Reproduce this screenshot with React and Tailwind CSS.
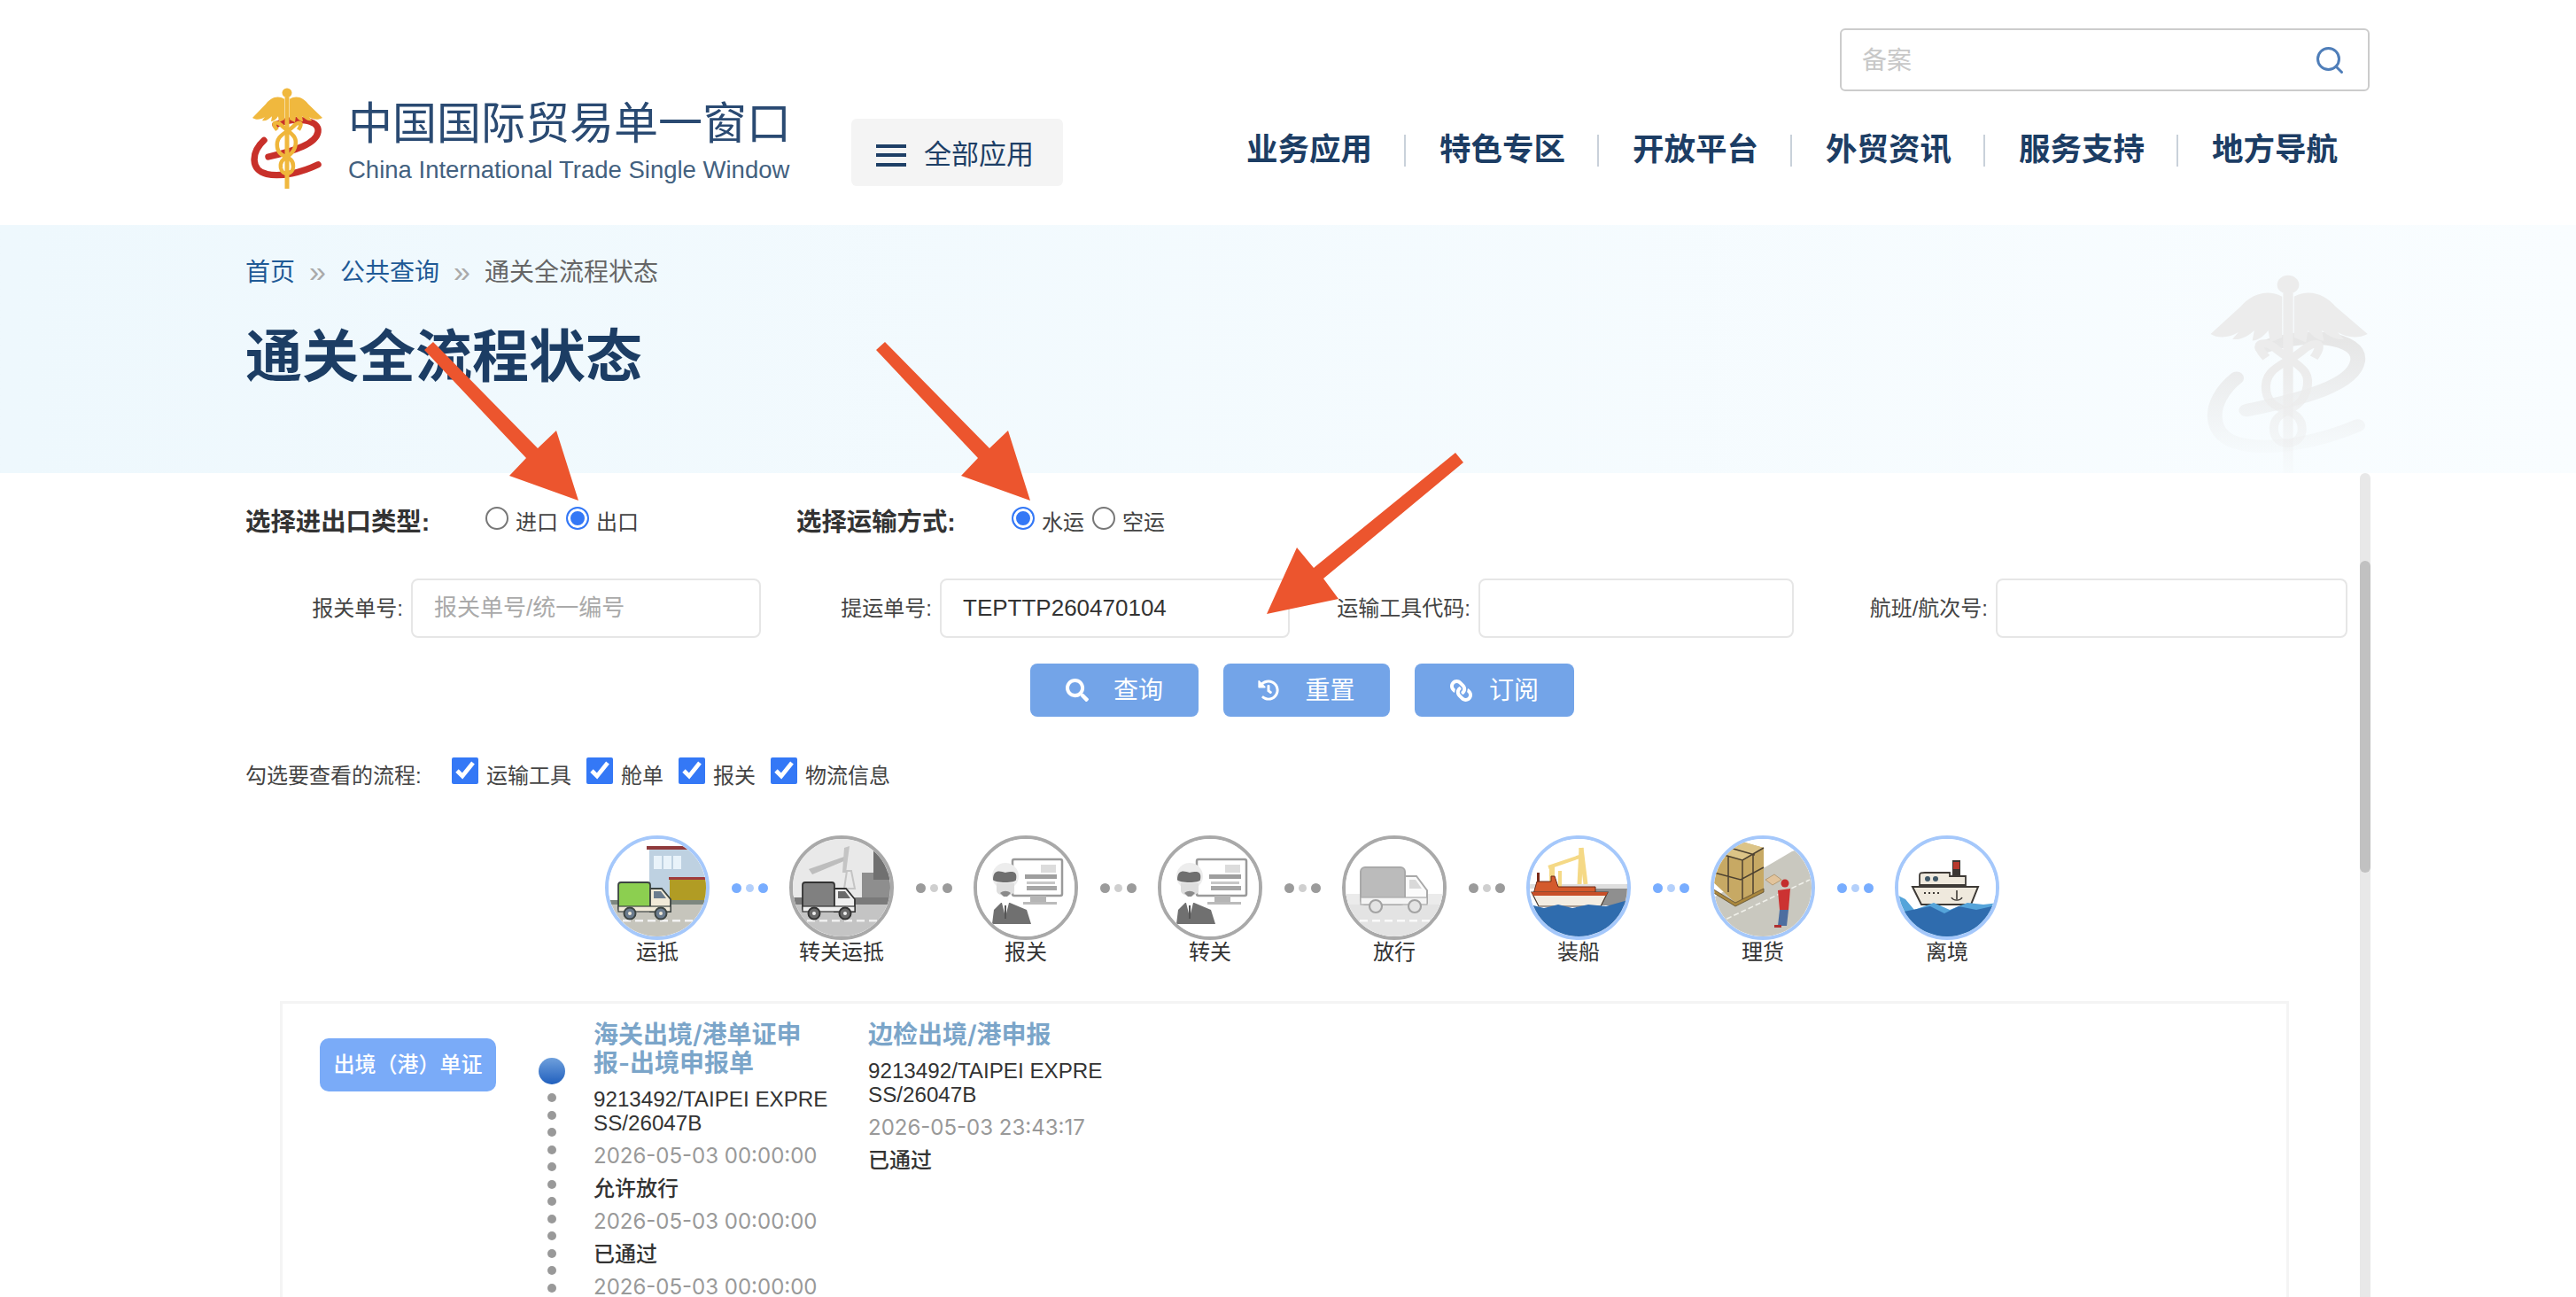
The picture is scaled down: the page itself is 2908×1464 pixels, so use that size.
import React from "react";
import { FaSearch, FaHistory, FaLink } from "react-icons/fa";
import { Search } from "lucide-react";

const sans = "font-['Liberation_Sans','Noto_Sans_CJK_SC',sans-serif]";
const inter = "font-['Inter','Noto_Sans_CJK_SC',sans-serif]";

const navItems = ["业务应用", "特色专区", "开放平台", "外贸资讯", "服务支持", "地方导航"];

// Logo mark, also used washed out as the banner watermark
function Caduceus({ wing, snake, swoosh, className, id, fade }) {
  const wingFill = fade ? `url(#${id})` : wing;
  const snakeStroke = fade ? `url(#${id})` : snake;
  const swooshStroke = fade ? `url(#${id}s)` : swoosh;
  return (
    <svg viewBox="12 6 82 118" preserveAspectRatio="none" className={className}>
      {fade && (
        <defs>
          <linearGradient id={id} gradientUnits="userSpaceOnUse" x1="0" y1="6" x2="0" y2="124">
            <stop offset="0" stopColor={wing} />
            <stop offset="0.5" stopColor={wing} />
            <stop offset="1" stopColor={wing} stopOpacity="0.1" />
          </linearGradient>
          <linearGradient id={`${id}s`} gradientUnits="userSpaceOnUse" x1="0" y1="45" x2="0" y2="115">
            <stop offset="0" stopColor={swoosh} />
            <stop offset="1" stopColor={swoosh} stopOpacity="0.05" />
          </linearGradient>
        </defs>
      )}
      <path d="M40 50C62 40 90 44 88 58C86 72 62 80 32 87" fill="none" stroke={swooshStroke} strokeWidth="7.5" strokeLinecap="round" />
      <path d="M27 68C12 82 12 103 30 107C46 111 70 105 88 96" fill="none" stroke={swooshStroke} strokeWidth="7.5" strokeLinecap="round" />
      <circle cx="53" cy="13" r="5.5" fill={wingFill} />
      <path d="M50 20C42 15 34 19 29 26L14 42C18 45 24 44 28 41L25 45C29 46 33 43 36 40L35 46C38 46 41 43 43 40L44 47L50 44Z" fill={wingFill} />
      <path d="M56 20C64 15 72 19 77 26L93 42C88 45 82 44 78 41L81 45C77 46 73 43 70 40L71 46C68 46 65 43 63 40L62 47L56 44Z" fill={wingFill} />
      <rect x="50.5" y="18" width="5" height="106" fill={wingFill} />
      <path d="M42 56C34 46 42 46 46 50C56 60 66 62 62 76C58 90 44 86 46 100C48 110 60 108 60 98C60 84 44 90 42 76C40 62 52 60 60 52C66 46 72 46 66 56" fill="none" stroke={snakeStroke} strokeWidth="4.5" />
    </svg>
  );
}

function Logo() {
  return (
    <div className="flex ml-[6px] mt-[98px] items-start">
      <Caduceus wing="#f0b83e" snake="#efb63a" swoosh="#c8302a" className="w-[82px] h-[115px]" />
      <div className="ml-[28px] flex flex-col">
        <div className="mt-[17px] text-[50px] leading-[50px] text-[#2a4a72] whitespace-nowrap">中国国际贸易单一窗口</div>
        <div className="mt-[13px] text-[27.5px] leading-[28px] text-[#43617f] whitespace-nowrap">China International Trade Single Window</div>
      </div>
    </div>
  );
}

function Truck({ cargo, cab, line, hub }) {
  return (
    <g>
      <rect x="15" y="53" width="36" height="32" rx="3" fill={cargo} stroke={line} strokeWidth="1.8" />
      <path d="M51 60H64L74 72V86H51Z" fill={cab} stroke={line} strokeWidth="1.8" />
      <path d="M55 63H63L69 71H55Z" fill={hub} />
      <rect x="15" y="80" width="59" height="6" fill={cab} stroke={line} strokeWidth="1.2" />
      <circle cx="28" cy="88" r="6.5" fill={hub} stroke={line} strokeWidth="2" />
      <circle cx="63" cy="88" r="6.5" fill={hub} stroke={line} strokeWidth="2" />
      <circle cx="28" cy="88" r="2" fill={cab} />
      <circle cx="63" cy="88" r="2" fill={cab} />
    </g>
  );
}

function RoadDashes({ color }) {
  return (
    <g fill={color}>
      {[6, 20, 34, 48, 62, 76, 90, 104].map((x) => (
        <rect key={x} x={x} y="95" width="9" height="2.5" />
      ))}
    </g>
  );
}

function SceneArrive() {
  return (
    <>
      <rect width="118" height="118" fill="#fff" />
      <rect x="50" y="16" width="68" height="62" fill="#bed1e1" />
      <rect x="47" y="12" width="46" height="4" fill="#8f3a3c" />
      {[55, 66, 77].map((x) => (
        <rect key={x} x={x} y="23" width="9" height="15" fill="#e9f3fa" />
      ))}
      <rect x="72" y="47" width="46" height="3" fill="#a03c3c" />
      <rect x="73" y="50" width="45" height="26" fill="#b19c24" />
      <rect x="0" y="73" width="118" height="5" fill="#7d877f" />
      <rect x="0" y="78" width="118" height="40" fill="#c6c5bc" />
      <RoadDashes color="#f2f2f2" />
      <Truck cargo="#8ccf50" cab="#f1ead8" line="#3c4442" hub="#6b7c8e" />
    </>
  );
}

function SceneTransfer() {
  return (
    <>
      <rect width="118" height="118" fill="#e9e9e9" />
      <path d="M62 60L65 40H70L74 60Z" fill="none" stroke="#c4c4c4" strokeWidth="2" />
      <path d="M22 38L62 24L64 28L26 44Z" fill="#bdbdbd" />
      <path d="M62 14L68 12L64 42H60Z" fill="#c4c4c4" />
      <path d="M82 42H118V70H82Z" fill="#8e8e8e" />
      <path d="M95 15L118 40V50H95Z" fill="#707070" />
      <rect x="0" y="70" width="118" height="8" fill="#7a7a7a" />
      <rect x="0" y="78" width="118" height="40" fill="#c4c4c4" />
      <RoadDashes color="#efefef" />
      <Truck cargo="#808080" cab="#f0f0f0" line="#333" hub="#6a6a6a" />
    </>
  );
}

function SceneOfficer() {
  return (
    <>
      <rect width="118" height="118" fill="#fff" />
      <rect x="44" y="27" width="56" height="41" rx="2" fill="#fff" stroke="#9a9a9a" strokeWidth="2.5" />
      <rect x="76" y="33" width="17" height="9" fill="#dcdcdc" />
      <rect x="58" y="44" width="36" height="5" fill="#9e9e9e" />
      <rect x="60" y="52" width="32" height="3" fill="#c7c7c7" />
      <rect x="60" y="57" width="34" height="5" fill="#a6a6a6" />
      <rect x="64" y="68" width="18" height="7" fill="#b5b5b5" />
      <rect x="56" y="75" width="38" height="3" fill="#bbbbbb" />
      <ellipse cx="36" cy="46" rx="15" ry="15" fill="#ededed" />
      <path d="M22 50C22 38 30 40 36 42C44 40 50 40 48 50C48 54 24 54 22 50Z" fill="#6f6f6f" />
      <path d="M26 54H46V62C46 70 26 70 26 62Z" fill="#dedede" />
      <path d="M30 65C34 62 38 62 42 65L38 69H34Z" fill="#8a8a8a" />
      <path d="M21 100L23 84L31 76H41L60 84L65 100Z" fill="#707070" />
      <path d="M32 76L36 92L40 76Z" fill="#fff" />
      <rect x="35" y="79" width="2" height="15" fill="#555" />
    </>
  );
}

function SceneRelease() {
  return (
    <>
      <rect width="118" height="118" fill="#fff" />
      <rect x="0" y="66" width="118" height="12" fill="#ebebeb" />
      <rect x="0" y="78" width="118" height="40" fill="#e3e3e3" />
      <RoadDashes color="#fafafa" />
      <rect x="21" y="36" width="50" height="42" rx="5" fill="#bbbbbb" stroke="#a9a9a9" strokeWidth="2" />
      <path d="M71 46H84L96 62V76H71Z" fill="#fbfbfb" stroke="#a9a9a9" strokeWidth="2" />
      <path d="M76 50H83L90 60H76Z" fill="#d9d9d9" />
      <rect x="21" y="70" width="75" height="8" fill="#f4f4f4" stroke="#a9a9a9" strokeWidth="1.2" />
      <circle cx="38" cy="80" r="7" fill="#e4e4e4" stroke="#a3a3a3" strokeWidth="2.2" />
      <circle cx="82" cy="80" r="7" fill="#e4e4e4" stroke="#a3a3a3" strokeWidth="2.2" />
    </>
  );
}

function SceneLoad() {
  return (
    <>
      <rect width="118" height="118" fill="#fff" />
      <rect x="50" y="55" width="68" height="24" fill="#8f8f8f" />
      <rect x="0" y="55" width="118" height="5" fill="#dedede" />
      <g fill="none" stroke="#f5d986" strokeWidth="5">
        <path d="M60 55L62 14" />
        <path d="M67 55L62 14" />
        <path d="M60 24L25 36" strokeWidth="4" />
        <path d="M29 36V56" strokeWidth="6" />
        <path d="M38 40V58" strokeWidth="4" />
      </g>
      <rect x="12" y="42" width="3" height="14" fill="#7a2a1a" />
      <path d="M8 66L12 52H28V46H32L36 58H78V66Z" fill="#d45a2c" stroke="#6a2a18" strokeWidth="1" />
      <path d="M6 64H92L84 80H14Z" fill="#f3ede2" stroke="#4a3a30" strokeWidth="1.2" />
      <path d="M6 64H92L90 68H8Z" fill="#c84f28" />
      <path d="M0 77L20 82L36 78L52 82L70 78L90 80L118 72V118H0Z" fill="#2f6cae" />
    </>
  );
}

function SceneTally() {
  return (
    <>
      <rect width="118" height="118" fill="#fff" />
      <path d="M0 72L92 18L118 10V118H0Z" fill="#c9c8bf" />
      <path d="M10 98L112 50" stroke="#f0f0ea" strokeWidth="1.6" strokeDasharray="6 3" />
      <path d="M2 52L8 20L32 6L60 14V60L28 76Z" fill="#c7a964" />
      <path d="M8 20L32 6L60 14L36 28Z" fill="#dcc487" />
      <g stroke="#4c4130" strokeWidth="1.5" fill="none">
        <path d="M36 28V72M8 20L36 28L60 14M4 42L34 50L60 36M20 24V64M48 22V66M22 14L50 22" />
      </g>
      <path d="M2 60L28 76L60 60V64L28 80L2 64Z" fill="#a9873e" stroke="#5c4a28" strokeWidth="0.8" />
      <path d="M62 50L72 44L80 50L70 56Z" fill="#e2c49c" stroke="#a08050" strokeWidth="0.6" />
      <circle cx="84" cy="54" r="4.5" fill="#c42c2c" />
      <path d="M76 62L90 60L88 84H78Z" fill="#cc3232" />
      <path d="M78 84H88L86 102H76Z" fill="#4d6ea0" />
      <rect x="72" y="101" width="8" height="3" fill="#b03030" />
    </>
  );
}

function SceneDepart() {
  return (
    <>
      <rect width="118" height="118" fill="#fff" />
      <rect x="65" y="28" width="9" height="32" fill="#3a3633" />
      <rect x="66" y="30" width="7" height="8" fill="#b8392e" />
      <path d="M28 45C28 42 30 42 34 42H62V46H80V56H28Z" fill="#efe9dd" stroke="#3e3a36" strokeWidth="1.8" />
      <circle cx="37" cy="49" r="3" fill="#3f5868" />
      <circle cx="46" cy="49" r="3" fill="#3f5868" />
      <path d="M20 58H94L86 78H30Z" fill="#efe9dd" stroke="#3e3a36" strokeWidth="2" />
      <path d="M33 65H50" stroke="#3e3a36" strokeWidth="2" strokeDasharray="2 3" />
      <path d="M70 62V72M64 70C66 74 74 74 76 70" stroke="#3e3a36" strokeWidth="1.6" fill="none" />
      <path d="M0 66L12 72L22 84L44 76L62 84L82 76L100 78L118 76V118H0Z" fill="#55a4da" />
      <path d="M0 88L20 84L40 80L56 88L72 80L92 84L118 78V118H0Z" fill="#2f6cae" />
    </>
  );
}

const steps = [
  { name: "运抵", active: true, Scene: SceneArrive },
  { name: "转关运抵", active: false, Scene: SceneTransfer },
  { name: "报关", active: false, Scene: SceneOfficer },
  { name: "转关", active: false, Scene: SceneOfficer },
  { name: "放行", active: false, Scene: SceneRelease },
  { name: "装船", active: true, Scene: SceneLoad },
  { name: "理货", active: true, Scene: SceneTally },
  { name: "离境", active: true, Scene: SceneDepart },
];

function Step({ name, active, Scene }) {
  return (
    <div className="w-[118px] flex flex-col items-center">
      <div className={`w-[118px] h-[118px] rounded-full overflow-hidden border-[4px] ${active ? "border-[#a5c8fb]" : "border-[#a9a9a9]"}`}>
        <svg viewBox="4 4 110 110" className="w-full h-full">
          <Scene />
        </svg>
      </div>
      <div className="text-[24px] leading-[28px] text-[#333] whitespace-nowrap">{name}</div>
    </div>
  );
}

function Dots({ active }) {
  return (
    <div className="w-[90px] h-[118px] flex items-center justify-center gap-[5px]">
      <span className={`w-[11px] h-[11px] rounded-full ${active ? "bg-[#78adff]" : "bg-[#9b9b9b]"}`} />
      <span className={`w-[9px] h-[9px] rounded-full ${active ? "bg-[#b4d0fb]" : "bg-[#cfcfcf]"}`} />
      <span className={`w-[11px] h-[11px] rounded-full ${active ? "bg-[#78adff]" : "bg-[#9b9b9b]"}`} />
    </div>
  );
}

function Field({ label, labelWidth, inputWidth, value, placeholder }) {
  return (
    <div className="flex items-center">
      <label className={`${labelWidth} text-right text-[24px] leading-[30px] text-[#444] whitespace-nowrap`}>{label}</label>
      <input
        readOnly
        value={value || ""}
        placeholder={placeholder}
        className={`${inputWidth} ml-[9px] h-[67px] pl-[24px] border-2 border-[#e6e6e6] rounded-[8px] bg-white text-[26px] text-[#333] placeholder:text-[#aaa] outline-none`}
      />
    </div>
  );
}

function Radio({ label, checked, name }) {
  return (
    <div className="flex items-start mr-[9px]">
      <input
        type="radio"
        name={name}
        defaultChecked={checked}
        className="appearance-none w-[26px] h-[26px] m-0 rounded-full border-2 border-[#777] bg-white checked:border-[#3478f6] checked:bg-[#3478f6] checked:shadow-[inset_0_0_0_3px_#fff]"
      />
      <span className="ml-[8px] mt-[6px] text-[24px] leading-[24px] text-[#444] whitespace-nowrap">{label}</span>
    </div>
  );
}

function Check({ label }) {
  return (
    <div className="flex items-start mr-[17px]">
      <input type="checkbox" defaultChecked className="w-[30px] h-[30px] m-0 accent-[#3478f6]" />
      <span className="ml-[9px] mt-[6px] text-[24px] leading-[30px] text-[#444] whitespace-nowrap">{label}</span>
    </div>
  );
}

function ActionButton({ icon, label, width, gap }) {
  return (
    <button className={`${width} ${gap} h-[60px] flex items-center justify-center rounded-[8px] bg-[#73a4e8] text-white text-[28px]`}>
      {icon}
      <span className="mt-[2px]">{label}</span>
    </button>
  );
}

function Record({ title, vessel, entries }) {
  return (
    <div className="w-[270px]">
      <div className={`${inter} text-[28px] leading-[32px] font-semibold text-[#7ba5c9]`}>{title}</div>
      <div className="mt-[11px] text-[24.2px] leading-[27px] text-[#333] break-all">{vessel}</div>
      {entries.map((entry, i) => (
        <div key={i} className={`mt-[10px] text-[24px] leading-[27px] ${entry.time ? `${inter} text-[#999]` : "font-medium text-[#333]"}`}>
          {entry.time || entry.status}
        </div>
      ))}
    </div>
  );
}

export default function App() {
  return (
    <div className={`${sans} relative w-[2908px] h-[1464px] overflow-hidden bg-white`}>
      {/* header */}
      <header className="h-[254px] pl-[277px] pr-[233px] flex items-start">
        <Logo />
        <button className="ml-[68px] mt-[134px] w-[239px] h-[76px] pl-[28px] pt-[6px] flex items-center rounded-[6px] bg-[#f4f4f4] text-[31px] text-[#1e3f66]">
          <span className="w-[34px] flex flex-col gap-[6.5px]">
            <span className="h-[4px] bg-[#1e3f66]" />
            <span className="h-[4px] bg-[#1e3f66]" />
            <span className="h-[4px] bg-[#1e3f66]" />
          </span>
          <span className="ml-[20px]">全部应用</span>
        </button>
        <div className="ml-auto flex flex-col items-end">
          <div className="mt-[32px] w-[598px] h-[71px] pl-[23px] pr-[25px] flex items-center justify-between border-2 border-[#ccc] rounded-[6px] bg-white">
            <span className="mt-[2px] text-[28px] text-[#c8c8c8]">备案</span>
            <Search className="w-[36px] h-[36px] text-[#4f7eb9]" strokeWidth={2} />
          </div>
          <nav className="mt-[49px] flex items-center">
            {navItems.map((item, i) => (
              <div key={item} className={`pl-[38px] pr-[36px] h-[36px] flex items-center text-[35.5px] font-bold text-[#1c3d64] whitespace-nowrap ${i > 0 ? "border-l-2 border-[#c9d1da]" : ""}`}>
                {item}
              </div>
            ))}
          </nav>
        </div>
      </header>

      {/* page banner */}
      <section className="h-[280px] pl-[277px] pr-[233px] flex justify-between bg-linear-to-r from-[#eef8fd] to-[#f9fdff]">
        <div>
          <div className="mt-[37px] flex items-center text-[28px] leading-[34px]">
            <span className="text-[#1f5a96]">首页</span>
            <span className="mx-[16px] -mt-[5px] text-[34px] text-[#aaa]">»</span>
            <span className="text-[#1f5a96]">公共查询</span>
            <span className="mx-[16px] -mt-[5px] text-[34px] text-[#aaa]">»</span>
            <span className="text-[#666]">通关全流程状态</span>
          </div>
          <h1 className="mt-[42px] text-[64px] leading-[72px] font-bold text-[#1c3d64]">通关全流程状态</h1>
        </div>
        <Caduceus id="wm" fade wing="#ececec" snake="#ececec" swoosh="#e6e6e6" className="self-end w-[184px] h-[226px]" />
      </section>

      {/* query form + result */}
      <div className="flex h-[930px]">
        <main className="w-[2664px] pl-[277px] overflow-hidden">
          <div className="mt-[38px] h-[81px] flex items-start">
            <div className="w-[622px] flex items-start">
              <div className="w-[271px] text-[28.4px] leading-[34px] font-bold text-[#333]">选择进出口类型:</div>
              <Radio name="ie" label="进口" />
              <Radio name="ie" label="出口" checked />
            </div>
            <div className="flex items-start">
              <div className="w-[243px] text-[28.4px] leading-[34px] font-bold text-[#333]">选择运输方式:</div>
              <Radio name="mode" label="水运" checked />
              <Radio name="mode" label="空运" />
            </div>
          </div>

          <div className="flex items-center">
            <Field label="报关单号:" labelWidth="w-[178px]" inputWidth="w-[395px]" placeholder="报关单号/统一编号" />
            <Field label="提运单号:" labelWidth="w-[193px]" inputWidth="w-[395px]" value="TEPTTP260470104" />
            <Field label="运输工具代码:" labelWidth="w-[204px]" inputWidth="w-[356px]" />
            <Field label="航班/航次号:" labelWidth="w-[219px]" inputWidth="w-[397px]" />
          </div>

          <div className="mt-[29px] ml-[886px] flex gap-[28px]">
            <ActionButton icon={<FaSearch className="w-[26px] h-[26px]" />} label="查询" width="w-[190px]" gap="gap-[28px]" />
            <ActionButton icon={<FaHistory className="w-[24px] h-[24px]" />} label="重置" width="w-[188px]" gap="gap-[29px]" />
            <ActionButton icon={<FaLink className="w-[25px] h-[25px] -scale-x-100" />} label="订阅" width="w-[180px]" gap="gap-[19px]" />
          </div>

          <div className="mt-[46px] h-[30px] flex items-start">
            <div className="w-[233px] mt-[6px] text-[24px] leading-[30px] text-[#444] whitespace-nowrap">勾选要查看的流程:</div>
            {["运输工具", "舱单", "报关", "物流信息"].map((label) => (
              <Check key={label} label={label} />
            ))}
          </div>

          <div className="mt-[58px] ml-[406px] flex items-start">
            {steps.map((step, i) => (
              <React.Fragment key={step.name}>
                <Step {...step} />
                {i < steps.length - 1 && <Dots active={step.active} />}
              </React.Fragment>
            ))}
          </div>

          <div className="mt-[41px] ml-[39px] w-[2268px] h-[600px] border-[3px] border-[#f4f4f4] pl-[42px] pt-[19px] flex items-start">
            <div className="mt-[20px] w-[199px] h-[60px] rounded-[10px] bg-[#7aabf8] flex items-center justify-center text-[24px] font-medium text-white whitespace-nowrap">
              出境（港）单证
            </div>
            <div className="ml-[48px] mt-[42px] w-[30px] flex flex-col items-center">
              <span className="w-[30px] h-[30px] rounded-full bg-linear-to-b from-[#6fa0dc] to-[#1f5fbd]" />
              <div className="mt-[10px] flex flex-col gap-[9.5px]">
                {Array.from({ length: 12 }).map((_, i) => (
                  <span key={i} className="block w-[10px] h-[10px] rounded-full bg-[#999]" />
                ))}
              </div>
            </div>
            <div className="ml-[32px] flex gap-[40px]">
              <Record
                title="海关出境/港单证申报-出境申报单"
                vessel="9213492/TAIPEI EXPRESS/26047B"
                entries={[
                  { time: "2026-05-03 00:00:00" },
                  { status: "允许放行" },
                  { time: "2026-05-03 00:00:00" },
                  { status: "已通过" },
                  { time: "2026-05-03 00:00:00" },
                ]}
              />
              <Record
                title="边检出境/港申报"
                vessel="9213492/TAIPEI EXPRESS/26047B"
                entries={[{ time: "2026-05-03 23:43:17" }, { status: "已通过" }]}
              />
            </div>
          </div>
        </main>

        {/* inner scrollbar */}
        <div className="w-[12px] h-full rounded-t-full bg-[#e8e8e8]">
          <div className="mt-[99px] h-[352px] rounded-full bg-[#c1c1c1]" />
        </div>
      </div>

      {/* annotation arrows drawn over the screenshot */}
      <svg className="absolute left-0 top-0 w-[2908px] h-[1464px] pointer-events-none" viewBox="0 0 2908 1464">
        <g fill="#ec552e">
          <polygon points="489,386 607,506 628,486 653,565 575,537 594,517 479,395" />
          <polygon points="999,386 1117,506 1138,486 1163,565 1085,537 1104,517 989,395" />
          <polygon points="1643,511 1483,641 1464,618 1430,693 1511,676 1494,653 1652,522" />
        </g>
      </svg>
    </div>
  );
}
